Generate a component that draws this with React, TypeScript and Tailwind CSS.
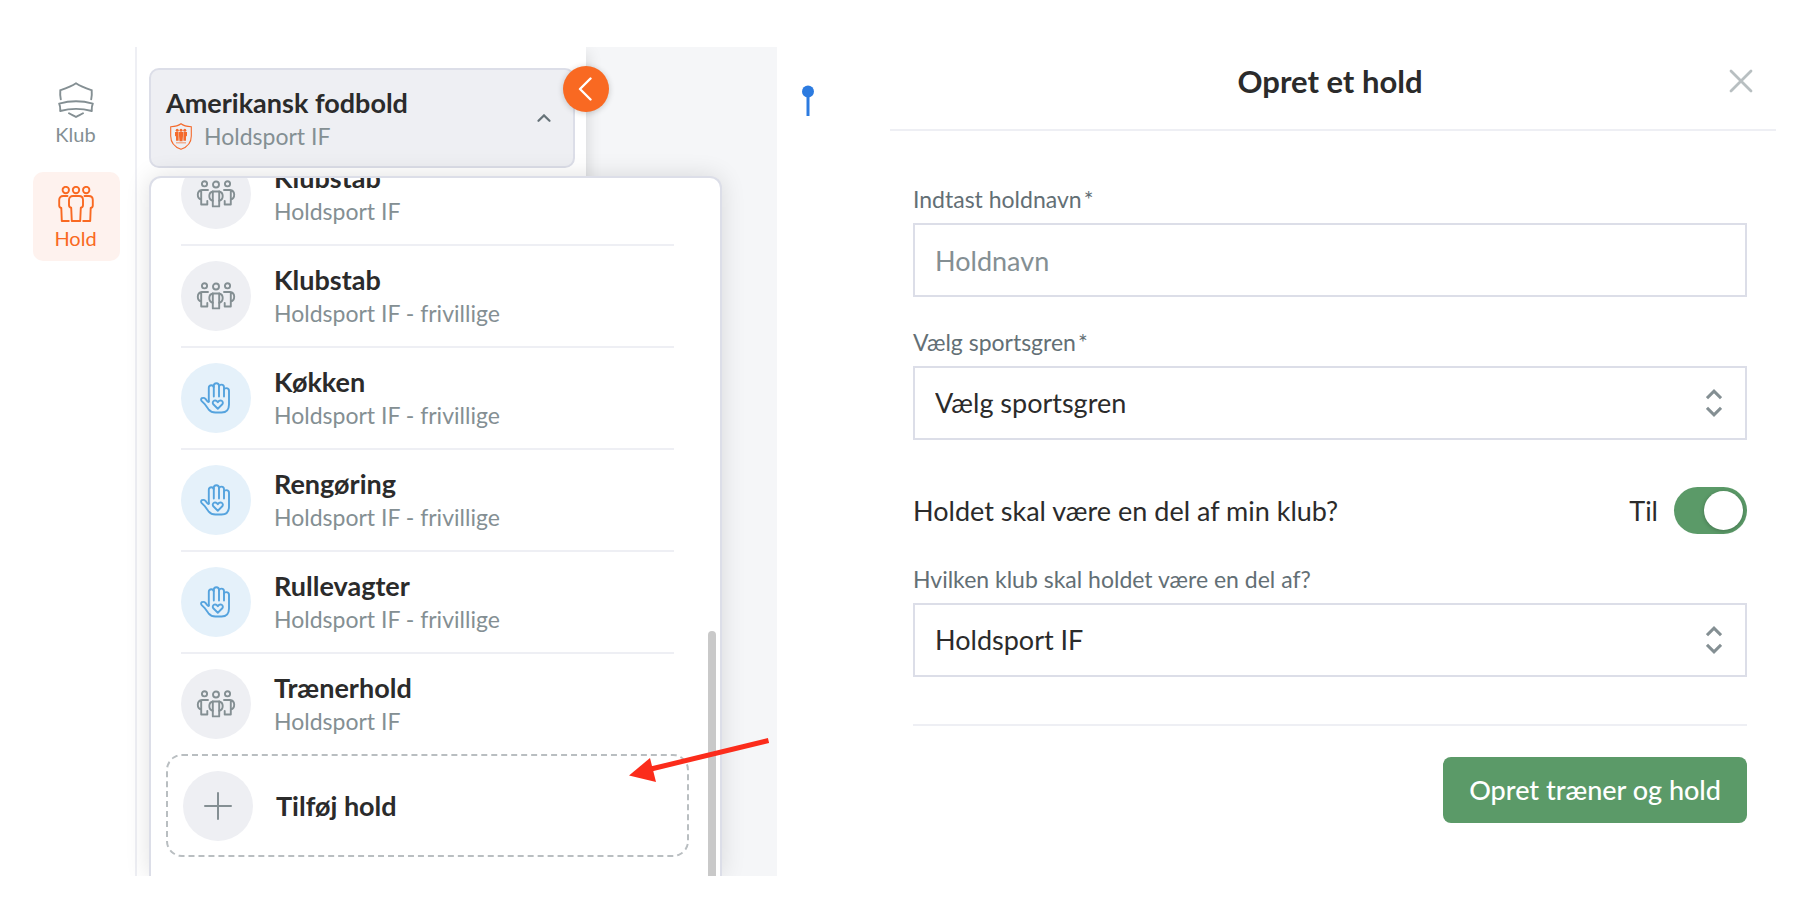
import { useState } from 'react';
import type { ReactNode } from 'react';

type Team = { name: string; club: string; kind: 'team' | 'volunteer' };

const teams: Team[] = [
  { name: 'Klubstab', club: 'Holdsport IF', kind: 'team' },
  { name: 'Klubstab', club: 'Holdsport IF - frivillige', kind: 'team' },
  { name: 'Køkken', club: 'Holdsport IF - frivillige', kind: 'volunteer' },
  { name: 'Rengøring', club: 'Holdsport IF - frivillige', kind: 'volunteer' },
  { name: 'Rullevagter', club: 'Holdsport IF - frivillige', kind: 'volunteer' },
  { name: 'Trænerhold', club: 'Holdsport IF', kind: 'team' },
];

function ClubIcon() {
  return (
    <svg className="h-9 w-9" viewBox="0 0 36 36" fill="none" stroke="currentColor" strokeWidth="1.9" strokeLinejoin="round" strokeLinecap="round" aria-hidden="true">
      <path d="M2.8 17.3C2.2 14 2 11.5 2.3 8.2C7 6.6 13 4.6 18 1.2C23 4.6 29 6.6 33.7 8.2C34 11.5 33.8 14 33.2 17.3" />
      <path d="M1.2 21.6C12 18.6 24 18.6 34.8 21.6C34 23.5 33.6 25.6 33.8 29C23.5 26.2 12.5 26.2 2.2 29C2.4 25.6 2 23.5 1.2 21.6Z" />
      <path d="M11 31.2C13 32.5 15.5 33.5 18 35C20.5 33.5 23 32.5 25 31.2" />
    </svg>
  );
}

function TeamIcon() {
  return (
    <svg className="h-9 w-9" viewBox="0 0 36 36" fill="none" stroke="currentColor" strokeWidth="1.9" strokeLinejoin="round" strokeLinecap="round" aria-hidden="true">
      <circle cx="7.8" cy="4" r="3.2" />
      <circle cx="18" cy="4" r="3.2" />
      <circle cx="28.2" cy="4" r="3.2" />
      <path d="M15 10H21C23.5 10 25 11.5 25 14V19C25 20.5 24 21.5 22.8 21.7L22.2 35H13.8L13.2 21.7C12 21.5 11 20.5 11 19V14C11 11.5 12.5 10 15 10Z" />
      <path d="M9.5 10H5.2C2.6 10 1.2 11.5 1.2 14V19.5C1.2 20.8 2 21.7 3.3 22L3.8 35H10.8" />
      <path d="M26.5 10H30.8C33.4 10 34.8 11.5 34.8 14V19.5C34.8 20.8 34 21.7 32.7 22L32.2 35H25.2" />
    </svg>
  );
}

function StaffIcon() {
  return (
    <svg className="h-7 w-10" viewBox="0 0 40 28" fill="none" stroke="currentColor" strokeWidth="1.9" strokeLinejoin="round" strokeLinecap="round" aria-hidden="true">
      <circle cx="8.5" cy="3.8" r="2.6" />
      <circle cx="20" cy="4.5" r="3" />
      <circle cx="31.5" cy="3.8" r="2.6" />
      <path d="M16.8 11.5H23.2V26.4H16.8Z" />
      <path d="M16.8 11.5C14.5 12 13.3 13.8 13.3 16C13.3 18.5 14.6 20.2 16.8 20.7" />
      <path d="M23.2 11.5C25.5 12 26.7 13.8 26.7 16C26.7 18.5 25.4 20.2 23.2 20.7" />
      <path d="M12 10H6C3 10.3 1.8 12.5 1.8 14.8C1.8 17 3 19 5.2 19.5V24.5H11.3V21M5.2 10.2V19.5" />
      <path d="M28 10H34C37 10.3 38.2 12.5 38.2 14.8C38.2 17 37 19 34.8 19.5V24.5H28.7V21M34.8 10.2V19.5" />
    </svg>
  );
}

function HandIcon() {
  return (
    <svg className="h-8 w-8" viewBox="0 0 32 32" fill="none" stroke="currentColor" strokeWidth="1.9" strokeLinejoin="round" strokeLinecap="round" aria-hidden="true">
      <path d="M8.8 19.5V5.800C8.800 4.300 9.800 3.300 11.300 3.300C12.800 3.300 13.800 4.300 13.800 5.800V14.500" />
      <path d="M13.8 5V3.800C13.800 2.200 14.800 1.200 16.400 1.200C18 1.200 19 2.200 19 3.800V14.500" />
      <path d="M19 4.500C19.300 3.200 20.200 2.600 21.500 2.600C23 2.600 24 3.600 24 5.200V14.500" />
      <path d="M24 7.500C24.400 6.500 25.200 6.100 26.200 6.100C27.800 6.100 29 7.100 29 8.700V22.500C29 27.500 26.200 30.500 21.500 30.500H15.500C12.500 30.500 10.300 29.500 8.500 27.300L4.500 21.800L1.500 18.800C0.800 17.800 1 16.700 1.900 16.200C3.200 15.600 4.600 15.900 5.500 16.900L7.300 19.300C8 20.300 8.800 20.300 8.800 19.200" />
      <path d="M17.800 26.700L13.300 22.300C12.300 21 12.700 19.200 14.200 18.600C15.600 18.200 16.900 18.800 17.800 20.200C18.700 18.800 20 18.200 21.400 18.600C22.900 19.200 23.300 21 22.300 22.300Z" />
    </svg>
  );
}

function ClubShield() {
  return (
    <svg className="h-[27px] w-[22px]" viewBox="0 0 22 27" fill="none" stroke="#f46a2c" strokeWidth="1.1" aria-hidden="true">
      <path d="M11 0.700C8.500 2.700 4.500 3.500 0.700 3.700V13C0.700 19.500 4.500 24 11 26.300C17.500 24 21.300 19.500 21.300 13V3.700C17.500 3.500 13.500 2.700 11 0.700Z" />
      <g fill="#f46a2c" stroke="none">
        <circle cx="7.200" cy="7.200" r="1.500" />
        <circle cx="11" cy="7.200" r="1.500" />
        <circle cx="14.800" cy="7.200" r="1.500" />
        <path d="M5 9H8.600V17.800H6V13.500L5 12.800Z" />
        <path d="M9 9H13V13L12.500 18.200H9.500L9 13Z" />
        <path d="M13.400 9H17V12.800L16 13.500V17.800H13.400Z" />
        <path d="M6 19.200H16V20.400H6Z" opacity="0.600" />
      </g>
    </svg>
  );
}

function NavItem({ label, active, children }: { label: string; active?: boolean; children: ReactNode }) {
  return (
    <a
      href="#"
      aria-current={active ? 'page' : undefined}
      className={
        'flex w-[87px] flex-col items-center gap-1 rounded-[10px] pt-3.5 pr-0.5 pb-[11px] text-xl leading-6 ' +
        (active ? 'bg-[#fef2ee] text-[#f96922]' : 'text-[#848f93]')
      }
    >
      {children}
      {label}
    </a>
  );
}

function TeamRow({ team, last }: { team: Team; last: boolean }) {
  const volunteer = team.kind === 'volunteer';
  return (
    <li className={'mx-[15px] border-[#eeeff4] ' + (last ? '' : 'border-b-2')}>
      <button type="button" className="flex w-full items-center gap-[23px] py-[15px] text-left">
        <span
          className={
            'flex size-[70px] shrink-0 items-center justify-center rounded-full ' +
            (volunteer ? 'bg-[#e5f1fa] text-[#55a3de]' : 'bg-[#eeeff3] text-[#848f93]')
          }
        >
          {volunteer ? <HandIcon /> : <StaffIcon />}
        </span>
        <span className="flex flex-col">
          <span className="text-[27px] leading-[34px] font-bold text-[#2b2b2b]">{team.name}</span>
          <span className="text-[23px] leading-8 text-[#848f93]">{team.club}</span>
        </span>
      </button>
    </li>
  );
}

function TeamMenu() {
  return (
    <div className="relative z-10 mt-2 w-[573px] overflow-hidden rounded-t-xl border-2 border-b-0 border-[#dcdee8] bg-white pr-[31px] pb-[19px] pl-[15px] shadow-[0_0_24px_rgba(0,0,0,0.12)]">
      <ul className="-mt-[34px]">
        {teams.map((team, i) => (
          <TeamRow key={i} team={team} last={i === teams.length - 1} />
        ))}
      </ul>
      <button
        type="button"
        className="flex w-full items-center gap-[23px] rounded-2xl border-2 border-dashed border-[#b9bec1] px-[15px] pt-[15px] pb-3.5 text-left"
      >
        <span className="flex size-[70px] items-center justify-center rounded-full bg-[#eeeff3] text-[#848f93]">
          <svg className="size-7" viewBox="0 0 28 28" fill="none" stroke="currentColor" strokeWidth="2" strokeLinecap="round" aria-hidden="true">
            <path d="M14 1V27M1 14H27" />
          </svg>
        </span>
        <span className="text-[27px] leading-[34px] font-bold text-[#2b2b2b]">Tilføj hold</span>
      </button>
      <div className="absolute top-[453px] right-1 bottom-0 w-2 rounded-t-full bg-[#c9c9c9]" />
    </div>
  );
}

function SelectField({ id, label, required, options }: { id: string; label: string; required?: boolean; options: string[] }) {
  return (
    <div className="flex flex-col gap-2">
      <label htmlFor={id} className="text-[23px] leading-8 text-[#636f75]">
        {label}
        {required && <span className="ml-0.5">*</span>}
      </label>
      <div className="relative">
        <select id={id} className="h-[74px] w-full appearance-none border-2 border-[#dcdee8] bg-white px-5 text-[27px] text-[#2b2b2b]">
          {options.map((o) => (
            <option key={o}>{o}</option>
          ))}
        </select>
        <svg className="pointer-events-none absolute top-[23px] right-[25px] h-7 w-4" viewBox="0 0 16 28" fill="none" stroke="#848f93" strokeWidth="3" aria-hidden="true">
          <path d="M1 9.200L8 2.200L15 9.200M1 18.800L8 25.800L15 18.800" />
        </svg>
      </div>
    </div>
  );
}

export default function App() {
  const [inClub, setInClub] = useState(true);
  return (
    <div className="flex min-h-screen items-start bg-white py-[47px] font-['Lato',sans-serif]">
      <div className="relative shrink-0">
        <div className="flex w-[777px] overflow-hidden bg-[#f5f6f8]">
          <nav className="flex w-[137px] shrink-0 flex-col items-center gap-[15px] border-r-2 border-[#eeeff4] bg-white pt-[21px] pl-[18px]">
            <NavItem label="Klub">
              <ClubIcon />
            </NavItem>
            <NavItem label="Hold" active>
              <TeamIcon />
            </NavItem>
          </nav>
          <div className="relative w-[449px] shrink-0 bg-white pt-[21px] pl-3 shadow-[8px_0_14px_-6px_rgba(0,0,0,0.12)]">
            <button
              type="button"
              className="flex w-[426px] items-center justify-between rounded-[10px] border-2 border-[#dcdee8] bg-[#eeeff3] pt-4 pr-[22px] pb-4 pl-[15px] text-left"
            >
              <span className="flex flex-col gap-0.5">
                <span className="text-[27px] leading-[34px] font-bold text-[#2b2b2b]">Amerikansk fodbold</span>
                <span className="flex items-center gap-3 pl-1 text-[23px] leading-7 text-[#848f93]">
                  <ClubShield />
                  Holdsport IF
                </span>
              </span>
              <svg className="h-2 w-3.5" viewBox="0 0 14 8" fill="none" stroke="#667278" strokeWidth="2.200" strokeLinecap="round" aria-hidden="true">
                <path d="M1.500 6.800L7 1.400L12.500 6.800" />
              </svg>
            </button>
            <button
              type="button"
              aria-label="Skjul menu"
              className="absolute top-[19px] -right-[23px] flex size-[46px] items-center justify-center rounded-full bg-[#f96922] pr-0.5 shadow-[0_1px_6px_rgba(0,0,0,0.2)]"
            >
              <svg className="h-6 w-3.5" viewBox="0 0 14 24" fill="none" stroke="white" strokeWidth="2.400" strokeLinecap="round" strokeLinejoin="round" aria-hidden="true">
                <path d="M12.500 1.500L2 12L12.500 22.500" />
              </svg>
            </button>
            <TeamMenu />
          </div>
        </div>
        <svg className="pointer-events-none absolute right-2 bottom-[93px] z-20 h-12 w-[142px]" viewBox="0 0 142 48" aria-hidden="true">
          <path d="M24 34L141.500 5.500" stroke="#fb2c1b" strokeWidth="5" />
          <path d="M2 40.500L23 23L29 47Z" fill="#fb2c1b" />
        </svg>
      </div>

      <svg className="mt-[38px] ml-[25px] h-[31px] w-3 shrink-0" viewBox="0 0 12 31" fill="#2c7be0" aria-hidden="true">
        <circle cx="6" cy="6.500" r="6" />
        <path d="M4.500 8H7.500V31H4.500Z" />
      </svg>

      <section className="mr-[38px] ml-[76px] min-w-0 flex-1">
        <header className="relative border-b-2 border-[#eeeff4] pt-3.5 pr-[29px] pb-7 pl-[23px]">
          <h1 className="text-center text-[31px] leading-10 font-bold text-[#2b2b2b]">Opret et hold</h1>
          <button type="button" aria-label="Luk" className="absolute top-[22px] right-[23px] text-[#b8bfc1]">
            <svg className="size-6" viewBox="0 0 24 24" fill="none" stroke="currentColor" strokeWidth="2.800" strokeLinecap="round" aria-hidden="true">
              <path d="M2 2L22 22M22 2L2 22" />
            </svg>
          </button>
        </header>
        <form className="pt-[52px] pr-[29px] pl-[23px]" onSubmit={(e) => e.preventDefault()}>
          <div className="mb-[29px] flex flex-col gap-2">
            <label htmlFor="team-name" className="text-[23px] leading-8 text-[#636f75]">
              Indtast holdnavn<span className="ml-0.5">*</span>
            </label>
            <input
              id="team-name"
              type="text"
              placeholder="Holdnavn"
              className="h-[74px] w-full border-2 border-[#dcdee8] px-5 text-[27px] text-[#2b2b2b] placeholder:text-[#848f93]"
            />
          </div>
          <SelectField id="sport" label="Vælg sportsgren" required options={['Vælg sportsgren']} />
          <div className="mt-[47px] mb-[29px] flex h-[47px] items-center justify-between text-[27px] leading-[34px] text-[#2b2b2b]">
            <label htmlFor="in-club">Holdet skal være en del af min klub?</label>
            <span className="flex items-center gap-4">
              {inClub ? 'Til' : 'Fra'}
              <input
                id="in-club"
                type="checkbox"
                role="switch"
                checked={inClub}
                onChange={(e) => setInClub(e.target.checked)}
                className="flex h-[47px] w-[73px] appearance-none items-center rounded-full bg-gray-300 px-1 before:size-[39px] before:rounded-full before:bg-white before:shadow-[0_1px_4px_rgba(0,0,0,0.25)] checked:justify-end checked:bg-[#5b9a68]"
              />
            </span>
          </div>
          <SelectField id="club" label="Hvilken klub skal holdet være en del af?" options={['Holdsport IF']} />
          <div className="mt-[47px] flex justify-end border-t-2 border-[#eeeff4] pt-[31px]">
            <button
              type="submit"
              className="h-[66px] rounded-lg bg-[#5b9a68] px-[26px] text-[27px] leading-[34px] font-medium text-white"
            >
              Opret træner og hold
            </button>
          </div>
        </form>
      </section>
    </div>
  );
}
